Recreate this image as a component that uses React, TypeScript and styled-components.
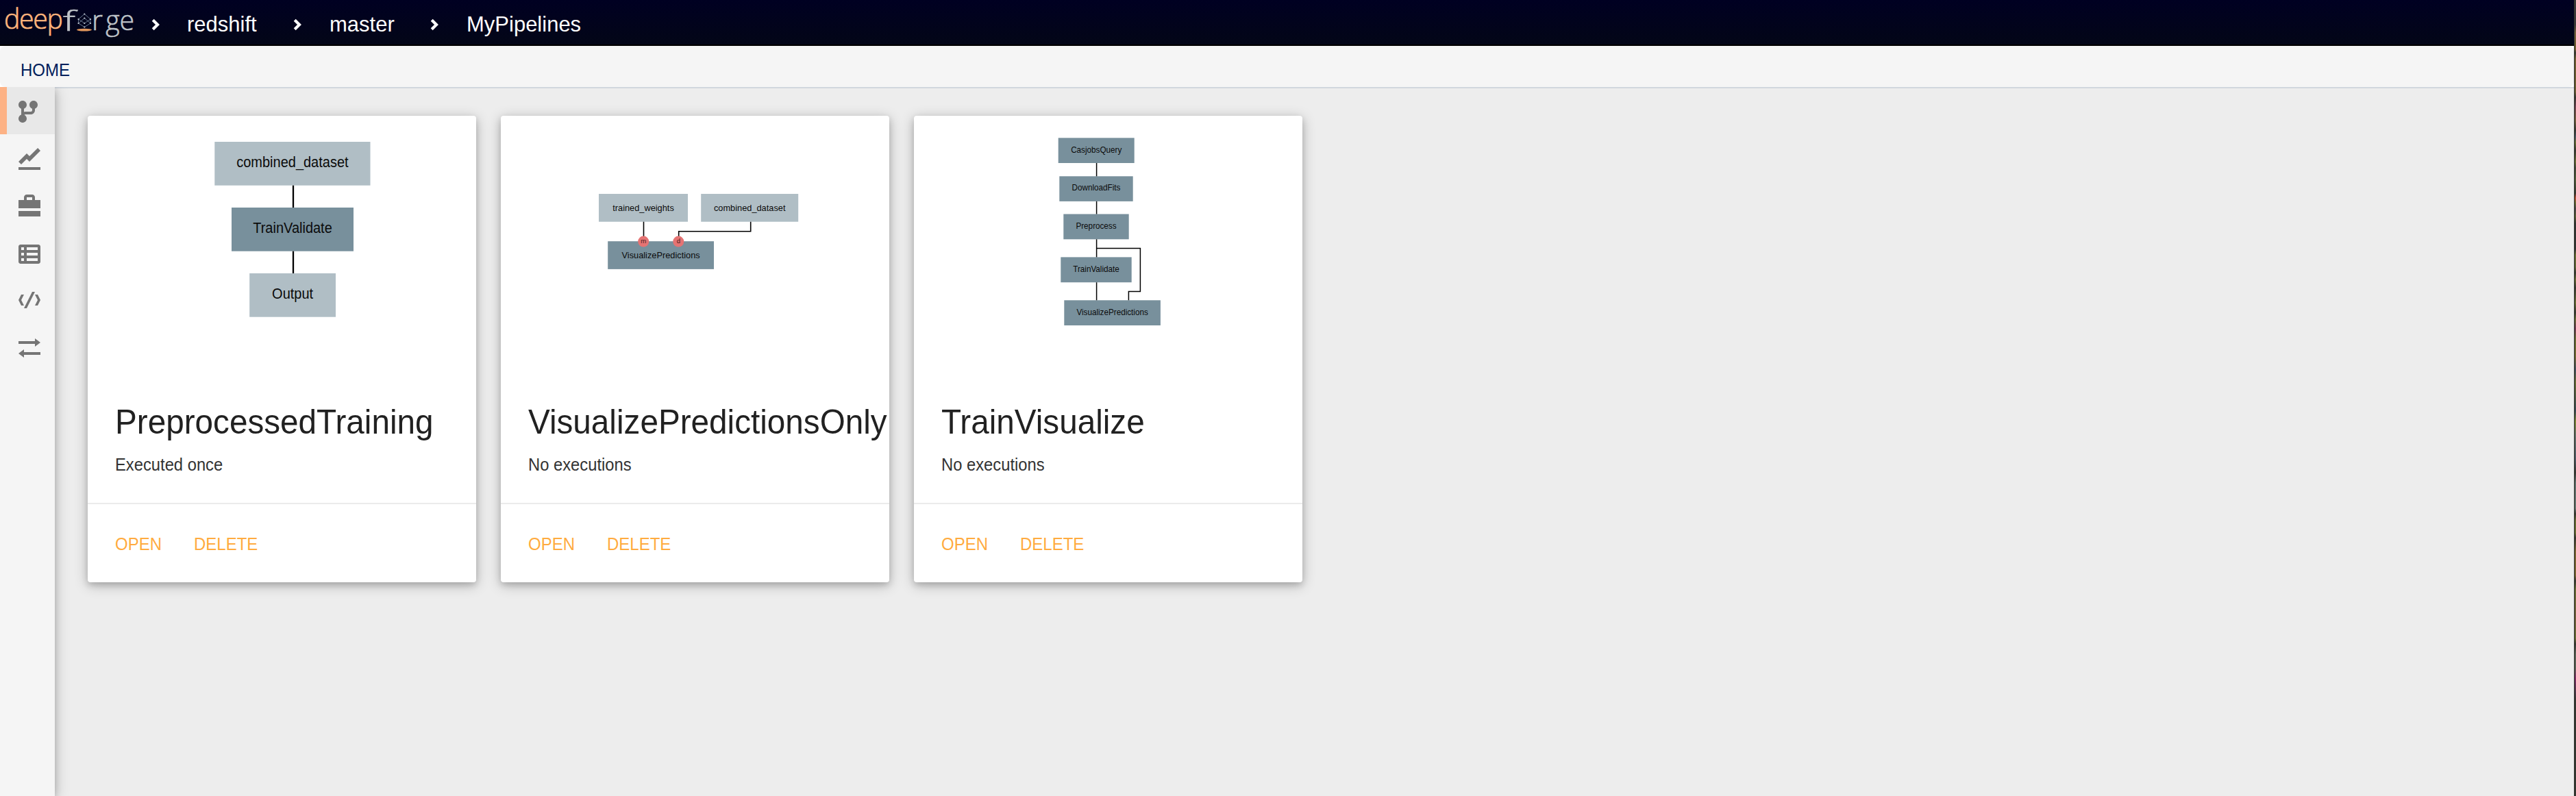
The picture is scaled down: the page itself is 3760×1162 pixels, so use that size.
import React from 'react';
import styled, { createGlobalStyle } from 'styled-components';

const GlobalStyle = createGlobalStyle`
  html, body, #root { height: 100%; }
  body {
    margin: 0;
    background: #ededed;
    font-family: 'Liberation Sans', Helvetica, Arial, sans-serif;
    overflow: hidden;
  }
  * { box-sizing: border-box; }
`;

const Shell = styled.div`
  display: flex;
  height: 1162px;
  width: 3760px;
`;

const Page = styled.div`
  display: flex;
  flex-direction: column;
  flex: 1;
  min-width: 0;
  background: #ededed;
`;

/* Sliver of the desktop wallpaper to the right of the window */
const Desktop = styled.div`
  width: 3px;
  border-left: 1px solid #33352f;
  background: linear-gradient(
    #3a3a38 0, #3a3a38 36px, #75603a 48px, #6d5a2c 72px, #33352f 77px, #6d5a2c 86px, #665a30 134px,
    #33352f 142px, #6a3f4c 156px, #6d5a38 176px, #33352f 190px, #45505c 200px, #62672f 208px,
    #33352f 220px, #62672f 236px, #3d4436 245px, #4d5a35 262px, #33352f 282px, #b0482e 289px,
    #62672f 296px, #444045 305px, #55592f 316px, #2f3230 326px, #2f3230 364px, #62672f 372px,
    #5c6133 390px, #33352f 398px, #62672f 408px, #33352f 420px, #62672f 442px, #33352f 456px,
    #62672f 466px, #6a3550 480px, #62672f 494px, #70652f 520px, #3d4c5a 540px, #62672f 558px,
    #33454f 600px, #75802f 615px, #5f6b62 635px, #4a5660 670px, #33352f 690px, #5a6a66 705px,
    #62716a 742px, #33352f 750px, #62672f 760px, #62672f 778px, #33352f 785px, #75602f 805px,
    #75602f 840px, #33352f 848px, #62672f 860px, #6d5a38 900px, #62672f 932px, #33352f 940px,
    #555d50 955px, #555d50 975px, #7a2a60 990px, #4a3545 1010px, #33352f 1022px, #33352f 100%
  );
`;

const Header = styled.header`
  display: flex;
  align-items: center;
  height: 67px;
  flex: none;
  background: linear-gradient(#000022, #030617);
  border-bottom: 2px solid #000;
  color: #fff;
`;

const LogoMark = styled.svg`
  display: block;
  flex: none;
  width: 221px;
  height: 65px;
  font-family: 'Open Sans', sans-serif;
  font-weight: 300;
`;

const Crumb = styled.span<{ $width: number }>`
  width: ${(p) => p.$width}px;
  padding-top: 7px;
  font-size: 31px;
  line-height: 40px;
  white-space: nowrap;
  transform: scaleY(1.04);
  transform-origin: 0 35px;
`;

const Chevron = styled.svg<{ $gap: number }>`
  display: block;
  flex: none;
  width: 12px;
  height: 18px;
  margin: 7px ${(p) => p.$gap}px 0 0;
`;

const NavBar = styled.div`
  background: #fff;
  flex: none;
`;

const Nav = styled.nav`
  display: flex;
  align-items: center;
  height: 60px;
  padding: 11px 30px 0;
  border-radius: 8px;
  background: #f5f5f5;
`;

const NavLink = styled.a`
  color: #00205b;
  font-size: 24px;
  line-height: 30px;
  transform: scaleY(1.06);
  transform-origin: 0 24px;
`;

const Body = styled.div`
  display: flex;
  flex: 1;
  min-height: 0;
`;

const Sidebar = styled.aside`
  display: flex;
  flex-direction: column;
  width: 80px;
  flex: none;
  z-index: 1;
  background: #f5f5f5;
  box-shadow: 0 4px 10px rgba(0, 0, 0, 0.16), 0 4px 20px rgba(0, 0, 0, 0.24);
  clip-path: inset(0 -40px 0 0);
`;

const SideItem = styled.div<{ $active?: boolean }>`
  height: 68.67px;
  padding: 20px 0 0 ${(p) => (p.$active ? 16.5 : 26.5)}px;
  border-left: ${(p) => (p.$active ? '10px solid #fdb285' : '0')};
  background: ${(p) => (p.$active ? '#e8e8e8' : 'transparent')};
`;

const SideIcon = styled.svg`
  display: block;
  width: 32px;
  height: 32px;
  fill: #757575;
`;

const Main = styled.main`
  display: flex;
  align-items: flex-start;
  flex: 1;
  gap: 36px;
  padding: 40px 48px;
  border-top: 2px solid #d1d7de;
`;

const Card = styled.article`
  display: flex;
  flex-direction: column;
  width: 567px;
  height: 681px;
  overflow: hidden;
  border-radius: 4px;
  background: #fff;
  box-shadow: 0 4px 10px rgba(0, 0, 0, 0.16), 0 4px 20px rgba(0, 0, 0, 0.24);
`;

const Diagram = styled.svg`
  display: block;
  width: 567px;
  height: 400px;
  flex: none;
`;

const CardContent = styled.div`
  height: 165px;
  padding: 14px 0 0 40px;
`;

const Title = styled.h2`
  margin: 0;
  color: #212121;
  font-size: 48px;
  font-weight: 400;
  line-height: 68px;
  white-space: nowrap;
  transform: scale(0.993, 1.06);
  transform-origin: 0 50px;
`;

const Status = styled.p`
  margin: 14px 0 0;
  color: #333;
  font-size: 24px;
  line-height: 28px;
  transform: scale(0.99, 1.06);
  transform-origin: 0 22px;
`;

const Actions = styled.div`
  display: flex;
  gap: 47px;
  flex: 1;
  padding: 44px 0 0 40px;
  border-top: 2px solid #ebebeb;
`;

const Action = styled.a`
  height: 30px;
  color: #ffab40;
  font-size: 24px;
  line-height: 30px;
  transform: scaleY(1.06);
  transform-origin: 0 23px;
`;

type Box = { x: number; y: number; w: number; h: number; label: string; base: number; light?: boolean };
type Port = { x: number; y: number; label: string };
type Graph = { font: number; stroke: number; boxes: Box[]; lines: string[]; ports?: Port[] };
type Pipeline = { name: string; status: string; graph: Graph };

const pipelines: Pipeline[] = [
  {
    name: 'PreprocessedTraining',
    status: 'Executed once',
    graph: {
      font: 20,
      stroke: 2.3,
      boxes: [
        { x: 185.3, y: 38, w: 227.2, h: 63.7, label: 'combined_dataset', base: 75, light: true },
        { x: 210, y: 134, w: 178, h: 63.7, label: 'TrainValidate', base: 171 },
        { x: 236.2, y: 230, w: 125.8, h: 63.7, label: 'Output', base: 267, light: true },
      ],
      lines: ['M300 101.7V134', 'M300 197.7V230'],
    },
  },
  {
    name: 'VisualizePredictionsOnly',
    status: 'No executions',
    graph: {
      font: 12.8,
      stroke: 1.6,
      boxes: [
        { x: 143, y: 114, w: 130, h: 40.7, label: 'trained_weights', base: 138.6, light: true },
        { x: 292.2, y: 114, w: 142, h: 40.7, label: 'combined_dataset', base: 138.6, light: true },
        { x: 156.2, y: 183.2, w: 154.8, h: 40.7, label: 'VisualizePredictions', base: 207.5 },
      ],
      lines: ['M208.5 154.7V178', 'M364.7 154.7V168.8H259.7V178'],
      ports: [
        { x: 208.2, y: 183.6, label: 'm' },
        { x: 259.3, y: 183.6, label: 'd' },
      ],
    },
  },
  {
    name: 'TrainVisualize',
    status: 'No executions',
    graph: {
      font: 11.7,
      stroke: 1.5,
      boxes: [
        { x: 210.7, y: 32.3, w: 111, h: 36.7, label: 'CasjobsQuery', base: 54.3 },
        { x: 212.3, y: 88.3, w: 107.4, h: 36.6, label: 'DownloadFits', base: 109.2 },
        { x: 218.3, y: 143.5, w: 95.4, h: 36.8, label: 'Preprocess', base: 165.2 },
        { x: 214.3, y: 206.4, w: 103.4, h: 36.8, label: 'TrainValidate', base: 228.2 },
        { x: 219.3, y: 269.3, w: 140.6, h: 36.7, label: 'VisualizePredictions', base: 291.2 },
      ],
      lines: [
        'M266.6 69V88.3',
        'M266.6 124.9V143.5',
        'M266.6 180.3V206.4',
        'M266.6 243.2V269.3',
        'M266.6 193.5H330.4V256.5H313.4V269.3',
      ],
    },
  },
];

const sideIcons: string[] = [
  'M1.5 0c-.83 0-1.5.67-1.5 1.5 0 .66.41 1.2 1 1.41v2.19c-.59.2-1 .75-1 1.41 0 .83.67 1.5 1.5 1.5s1.5-.67 1.5-1.5c0-.6-.34-1.1-.84-1.34.09-.09.21-.16.34-.16h2c.82 0 1.5-.68 1.5-1.5v-.59c.59-.2 1-.75 1-1.41 0-.83-.67-1.5-1.5-1.5s-1.5.67-1.5 1.5c0 .66.41 1.2 1 1.41v.59c0 .28-.22.5-.5.5h-2c-.17 0-.35.04-.5.09v-1.19c.59-.2 1-.75 1-1.41 0-.83-.67-1.5-1.5-1.5z',
  'M7.03 0l-3.03 3-1-1-3 3.03 1 1 2-2.03 1 1 4-4-.97-1zm-7.03 7v1h8v-1h-8z',
  'M3 0c-.55 0-1 .45-1 1v1h-1.91c-.06 0-.09.04-.09.09v2.91h8v-2.91c0-.06-.04-.09-.09-.09h-1.91v-1c0-.55-.45-1-1-1h-2zm0 1h2v1h-2v-1zm-3 5v1.91c0 .05.04.09.09.09h7.81c.06 0 .1-.04.1-.09v-1.91h-8z',
  'M.75 1c-.41 0-.75.34-.75.75v5.5c0 .41.34.75.75.75h6.5c.41 0 .75-.34.75-.75v-5.5c0-.41-.34-.75-.75-.75h-6.5zm.25 1h1v1h-1v-1zm2 0h4v1h-4v-1zm-2 2h1v1h-1v-1zm2 0h4v1h-4v-1zm-2 2h1v1h-1v-1zm2 0h4v1h-4v-1z',
  'M5 1l-3 6h1l3-6h-1zm-4 1l-1 2 1 2h1l-1-2 1-2h-1zm5 0l1 2-1 2h1l1-2-1-2h-1z',
  'M6 1v1h-6v1h6v1l2-1.5-2-1.5zm-4 4l-2 1.5 2 1.5v-1h6v-1h-6v-1z',
];

const latticeNodes: [number, number][] = [
  [123.3, 20.5], [114.5, 28], [132, 28], [123.3, 26.5], [114.5, 34], [132, 34], [123.3, 34], [123.3, 39.5],
];

function Logo() {
  return (
    <LogoMark viewBox="0 0 221 65">
      <g fill="#fdb47c" stroke="#fdb47c" strokeWidth=".7">
        <text x="6" y="41.7" fontSize="41" letterSpacing="-1.4" textLength="84.5" lengthAdjust="spacingAndGlyphs">deep</text>
      </g>
      <g fill="#bfc3c8" stroke="#bfc3c8" strokeWidth=".6" fontSize="41">
        <text x="92" y="44.5" textLength="18" lengthAdjust="spacingAndGlyphs">f</text>
        <text x="134" y="44">r</text>
        <text x="154.2" y="44" textLength="42" lengthAdjust="spacingAndGlyphs">ge</text>
      </g>
      <ellipse cx="123" cy="43.6" rx="11" ry="1.9" fill="#e0965c" />
      <path
        d="M123.3 20.5L114.5 28L123.3 34L132 28ZM114.5 34L123.3 39.5L132 34L123.3 26.5ZM114.5 28V34M132 28V34"
        fill="none"
        stroke="#7f93a8"
        strokeWidth=".8"
      />
      {latticeNodes.map(([x, y]) => (
        <circle key={`${x}-${y}`} cx={x} cy={y} r="1.1" fill="#c3cbd4" />
      ))}
    </LogoMark>
  );
}

function Arrow({ gap }: { gap: number }) {
  return (
    <Chevron viewBox="0 0 12 18" $gap={gap}>
      <path d="M2.2 2.2L9 9L2.2 15.8" fill="none" stroke="#fff" strokeWidth="4.2" />
    </Chevron>
  );
}

function PipelineGraph({ graph }: { graph: Graph }) {
  return (
    <Diagram viewBox="0 0 567 400">
      {graph.boxes.map((b) => (
        <g key={b.label}>
          <rect x={b.x} y={b.y} width={b.w} height={b.h} fill={b.light ? '#b0bec5' : '#78909c'} />
          <text
            transform={`translate(${b.x + b.w / 2} ${b.base}) scale(1 1.06)`}
            fontSize={graph.font}
            textAnchor="middle"
            fill="#0b0b0b"
          >
            {b.label}
          </text>
        </g>
      ))}
      {graph.lines.map((d) => (
        <path key={d} d={d} fill="none" stroke="#000" strokeWidth={graph.stroke} />
      ))}
      {graph.ports?.map((p) => (
        <g key={p.label}>
          <circle cx={p.x} cy={p.y} r="8" fill="#e57373" />
          <text x={p.x} y={p.y + 2.4} fontSize="9.6" textAnchor="middle" fill="#4a2020">{p.label}</text>
        </g>
      ))}
    </Diagram>
  );
}

export default function App() {
  return (
    <>
      <GlobalStyle />
      <Shell>
        <Page>
          <Header>
            <Logo />
            <Arrow gap={40} />
            <Crumb $width={155}>redshift</Crumb>
            <Arrow gap={41} />
            <Crumb $width={147}>master</Crumb>
            <Arrow gap={41} />
            <Crumb $width={200}>MyPipelines</Crumb>
          </Header>
          <NavBar>
            <Nav>
              <NavLink>HOME</NavLink>
            </Nav>
          </NavBar>
          <Body>
            <Sidebar>
              {sideIcons.map((d, i) => (
                <SideItem key={d} $active={i === 0}>
                  <SideIcon viewBox="0 0 8 8">
                    <path d={d} fillRule="evenodd" />
                  </SideIcon>
                </SideItem>
              ))}
            </Sidebar>
            <Main>
              {pipelines.map((p) => (
                <Card key={p.name}>
                  <PipelineGraph graph={p.graph} />
                  <CardContent>
                    <Title>{p.name}</Title>
                    <Status>{p.status}</Status>
                  </CardContent>
                  <Actions>
                    <Action>OPEN</Action>
                    <Action>DELETE</Action>
                  </Actions>
                </Card>
              ))}
            </Main>
          </Body>
        </Page>
        <Desktop />
      </Shell>
    </>
  );
}
